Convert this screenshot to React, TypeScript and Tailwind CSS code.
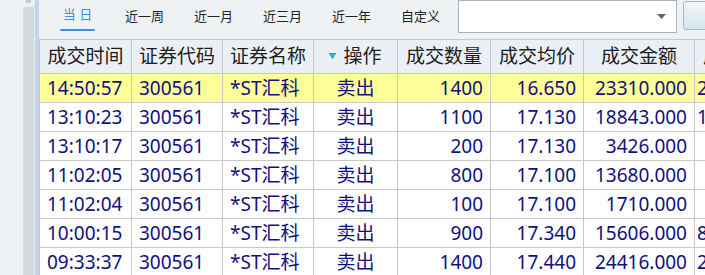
import React from "react";

const rows = [
  ["14:50:57", "300561", "*ST汇科", "卖出", "1400", "16.650", "23310.000", "2"],
  ["13:10:23", "300561", "*ST汇科", "卖出", "1100", "17.130", "18843.000", "1"],
  ["13:10:17", "300561", "*ST汇科", "卖出", "200", "17.130", "3426.000", ""],
  ["11:02:05", "300561", "*ST汇科", "卖出", "800", "17.100", "13680.000", ""],
  ["11:02:04", "300561", "*ST汇科", "卖出", "100", "17.100", "1710.000", ""],
  ["10:00:15", "300561", "*ST汇科", "卖出", "900", "17.340", "15606.000", "8"],
  ["09:33:37", "300561", "*ST汇科", "卖出", "1400", "17.440", "24416.000", "2"],
];

const cols = "grid-cols-[92px_91px_91px_84px_93px_93px_111px_100px]";
const font = { fontFamily: '"Noto Sans", "Noto Sans CJK SC", sans-serif' };

export default function App() {
  return (
    <div className="w-[705px] h-[275px] overflow-hidden flex bg-[#eef2f5]" style={font}>
      {/* left strip */}
      <div className="w-[23px] shrink-0 bg-[#eef2f5]" />
      <div className="w-[11px] shrink-0 flex flex-col">
        <div className="h-[7px] flex justify-center">
          <div className="w-[5px] h-[3px] bg-[#c6cacd]" />
        </div>
        <div className="flex-1 bg-[#d3d9dc]" />
      </div>
      <div className="w-[1px] shrink-0 bg-[#e4eaee]" />
      <div className="w-[4px] shrink-0 bg-[#c3d5ec]" />
      {/* main */}
      <div className="flex-1 flex flex-col min-w-0 overflow-hidden">
        {/* toolbar */}
        <div className="h-[39px] shrink-0 flex items-start pl-[21px] text-[13px] text-[#222] overflow-hidden">
          <div className="w-[35px] h-[31px] shrink-0 flex flex-col items-center">
            <div className="h-[29px] flex items-center text-[#3a8ee6] leading-none">当 日</div>
            <div className="w-[35px] h-[2px] rounded-full bg-[#3d8fe0]" />
          </div>
          <div className="ml-[30px] w-[69px] h-[33px] shrink-0 flex items-center leading-none">近一周</div>
          <div className="w-[69px] h-[33px] shrink-0 flex items-center leading-none">近一月</div>
          <div className="w-[69px] h-[33px] shrink-0 flex items-center leading-none">近三月</div>
          <div className="w-[69px] h-[33px] shrink-0 flex items-center leading-none">近一年</div>
          <div className="w-[57px] h-[33px] shrink-0 flex items-center leading-none">自定义</div>
          <div className="w-[219px] h-[33px] shrink-0 bg-white border border-[#a9b2ba] flex items-center justify-end pr-[10px]">
            <svg width="9" height="5" viewBox="0 0 9 5">
              <path d="M0 0 L9 0 L4.5 5 Z" fill="#666" />
            </svg>
          </div>
          <div className="ml-[6px] mt-[1px] w-[40px] h-[29px] shrink-0 rounded-[3px] border border-[#aab4bc] bg-gradient-to-b from-[#f2f6f8] to-[#d5e6ef]" />
        </div>
        {/* table */}
        <div className="border-l border-t border-[#c4c8cc] flex-1">
          <div className={`grid ${cols} h-[34px] bg-[#eaf0f5] border-b border-[#c4c8cc] text-[19px] text-[#1c1c1c]`}>
            {["成交时间", "证券代码", "证券名称", "操作", "成交数量", "成交均价", "成交金额", "成交编号"].map((h, i) => (
              <div
                key={i}
                className={`border-r border-[#c4c8cc] flex items-center overflow-hidden whitespace-nowrap ${
                  i === 7 ? "justify-start pl-[8px]" : "justify-center"
                }`}
              >
                {i === 3 && (
                  <svg width="7" height="6" viewBox="0 0 7 6" className="mr-[7px] mt-[-2px]">
                    <path d="M0 0 L7 0 L3.5 6 Z" fill="#27c4d6" />
                    <path d="M0.5 0.5 L6.5 0.5 L3.5 5.5 Z" fill="none" stroke="#1a8fa0" strokeWidth="0.6" />
                  </svg>
                )}
                <span className="leading-none">{h}</span>
              </div>
            ))}
          </div>
          {rows.map((r, ri) => (
            <div
              key={ri}
              className={`grid ${cols} h-[29px] border-b border-[#c8c8c8] text-[19px] text-[#10107e] ${
                ri === 0 ? "bg-[#ffff99]" : "bg-white"
              }`}
            >
              {r.map((c, ci) => (
                <div
                  key={ci}
                  className={`border-r border-[#c8c8c8] flex items-center overflow-hidden whitespace-nowrap leading-none ${
                    ci <= 2
                      ? "justify-start pl-[7px]"
                      : ci === 3
                      ? "justify-center"
                      : ci === 7
                      ? "justify-start pl-[2px]"
                      : "justify-end pr-[7px]"
                  }`}
                >
                  {c}
                </div>
              ))}
            </div>
          ))}
        </div>
      </div>
    </div>
  );
}
